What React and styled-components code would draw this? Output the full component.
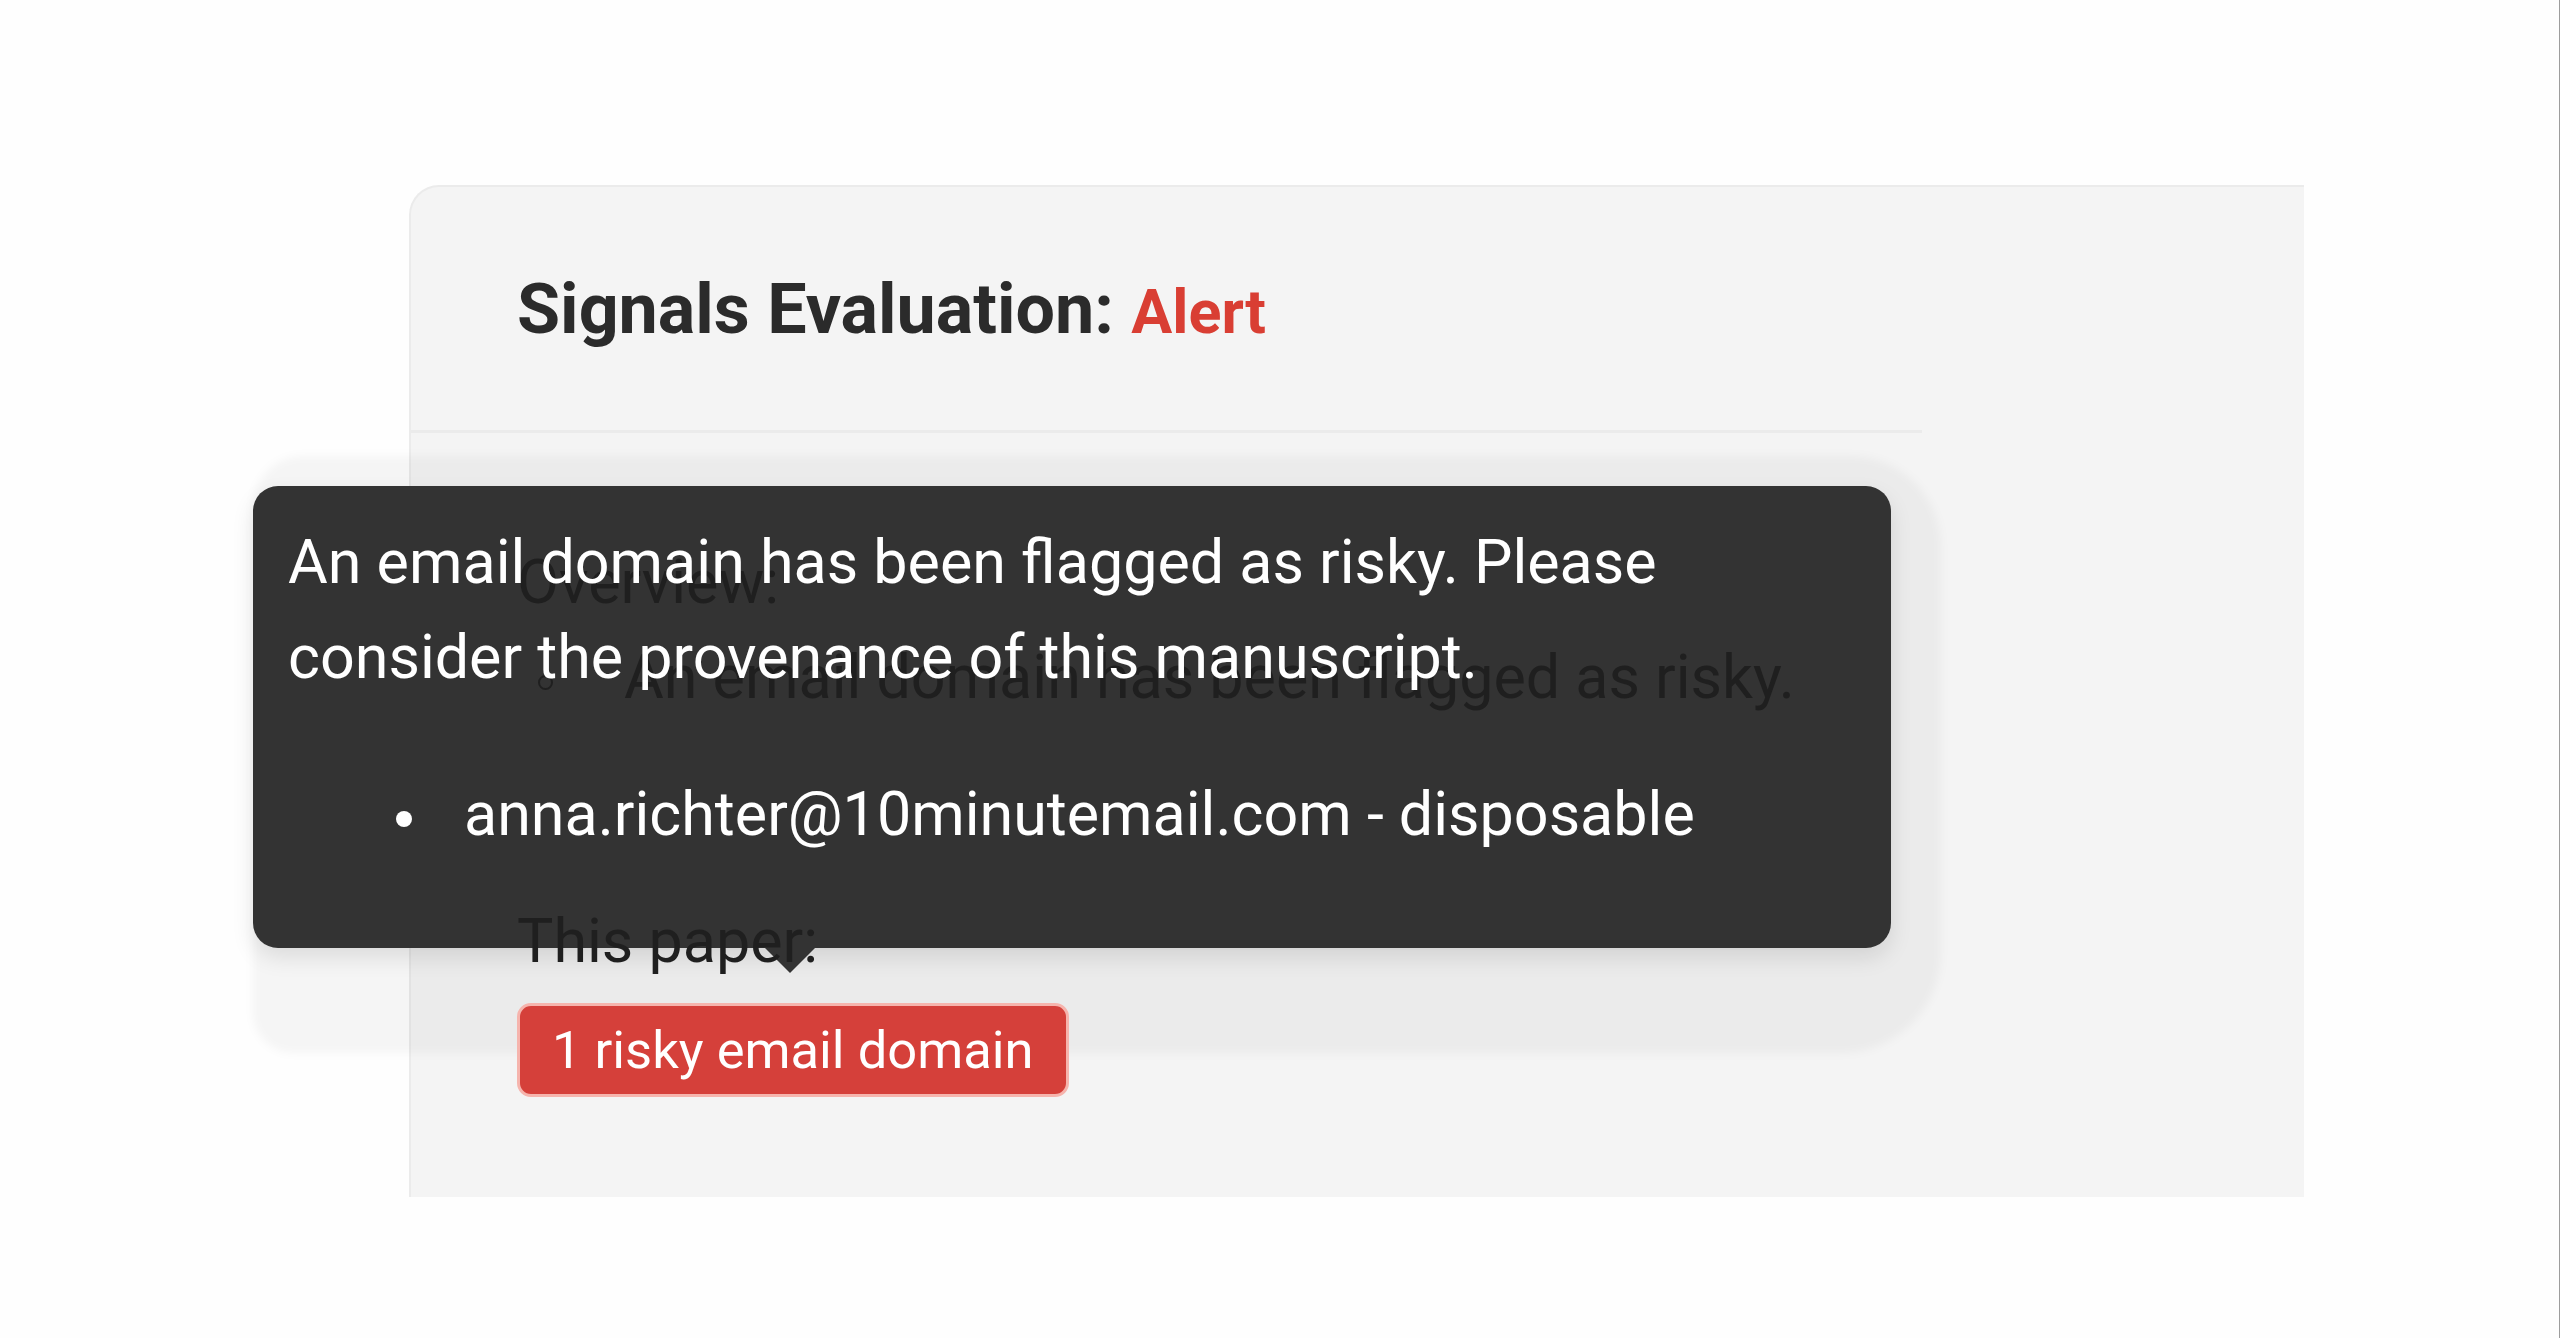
import React from 'react'
import styled, { createGlobalStyle } from 'styled-components'

const Global = createGlobalStyle`
  html, body {
    margin: 0;
    padding: 0;
    background: #fefefe;
  }
  body {
    font-family: Roboto, "Noto Sans", Arial, sans-serif;
    overflow: hidden;
  }
`;

const Page = styled.div`
  min-height: 100vh;
  box-sizing: border-box;
  padding: 185px 0 0 409px;
  border-right: 1px solid #9d9d9d;
`;

const Card = styled.section`
  width: 1895px;
  box-sizing: border-box;
  background: #f4f4f4;
  border-top: 2px solid #ebebeb;
  border-left: 2px solid #ebebeb;
  border-top-left-radius: 30px;
  padding-bottom: 100px;
`;

const Header = styled.header`
  width: 1511px;
  box-sizing: border-box;
  padding: 80px 0 79px 106px;
  border-bottom: 3px solid #ebebeb;
`;

const Title = styled.h1`
  margin: 0;
  font-size: 70px;
  font-weight: 700;
  line-height: 84px;
  color: #2b2b2b;
`;

const Alert = styled.span`
  font-size: 61px;
  line-height: 1;
  color: #d93e33;
`;

const Body = styled.div`
  padding: 102px 0 0 106px;
`;

const Text = styled.p`
  position: relative;
  z-index: 1;
  margin: 0 0 ${p => p.$gap || 0}px;
  font-size: 61px;
  line-height: 95px;
  color: #1f1f1f;
`;

const SubList = styled.ul`
  list-style: none;
  margin: 0 0 169px;
  padding: 0 0 0 107px;
`;

const SubItem = styled.li`
  position: relative;
  z-index: 1;
  font-size: 61px;
  line-height: 95px;
  color: #1f1f1f;

  &::before {
    content: '';
    position: absolute;
    left: -86px;
    top: 45px;
    width: 15px;
    height: 15px;
    box-sizing: border-box;
    border: 2.5px solid #1f1f1f;
    border-radius: 50%;
  }
`;

const BadgeWrap = styled.div`
  position: relative;
  display: inline-block;
`;

const Badge = styled.span`
  position: relative;
  z-index: 1;
  display: inline-block;
  background: #d5403a;
  color: #fff;
  font-size: 52.5px;
  line-height: 62px;
  padding: 13px 32px;
  border: 3px solid #f6b4ad;
  border-radius: 14px;
`;

const TooltipShadow = styled.div`
  position: absolute;
  left: -264px;
  bottom: calc(100% - 50px);
  width: 1688px;
  height: 597px;
  border-radius: 50px 90px 100px 40px;
  background: rgba(0, 0, 0, 0.035);
  filter: blur(4px);
`;

const Tooltip = styled.div`
  position: absolute;
  left: -264px;
  bottom: calc(100% + 55px);
  width: 1638px;
  box-sizing: border-box;
  padding: 29px 35px 26px;
  background: #333333;
  border-radius: 25px;
  color: #fff;
  font-size: 61px;
  line-height: 95px;
  box-shadow: 0 10px 22px rgba(0, 0, 0, 0.1);

  &::after {
    content: '';
    position: absolute;
    left: 512px;
    top: 100%;
    border-left: 25px solid transparent;
    border-right: 25px solid transparent;
    border-top: 25px solid #333333;
  }
`;

const TipText = styled.p`
  position: relative;
  z-index: 2;
  margin: 0 0 62px;
`;

const TipList = styled.ul`
  position: relative;
  z-index: 2;
  list-style: none;
  margin: 0 0 60px;
  padding: 0 0 0 176px;
`;

const TipItem = styled.li`
  position: relative;

  &::before {
    content: '';
    position: absolute;
    left: -68px;
    top: 44px;
    width: 16px;
    height: 16px;
    background: #fff;
    border-radius: 50%;
  }
`;

export default function App() {
  return (
    <>
      <Global />
      <Page>
        <Card>
          <Header>
            <Title>
              Signals Evaluation: <Alert>Alert</Alert>
            </Title>
          </Header>
          <Body>
            <Text>Overview:</Text>
            <SubList>
              <SubItem>An email domain has been flagged as risky.</SubItem>
            </SubList>
            <Text $gap={14}>This paper:</Text>
            <BadgeWrap>
              <TooltipShadow />
              <Tooltip>
                <TipText>
                  An email domain has been flagged as risky. Please consider the provenance of this manuscript.
                </TipText>
                <TipList>
                  <TipItem>anna.richter@10minutemail.com - disposable</TipItem>
                </TipList>
              </Tooltip>
              <Badge>1 risky email domain</Badge>
            </BadgeWrap>
          </Body>
        </Card>
      </Page>
    </>
  )
}
